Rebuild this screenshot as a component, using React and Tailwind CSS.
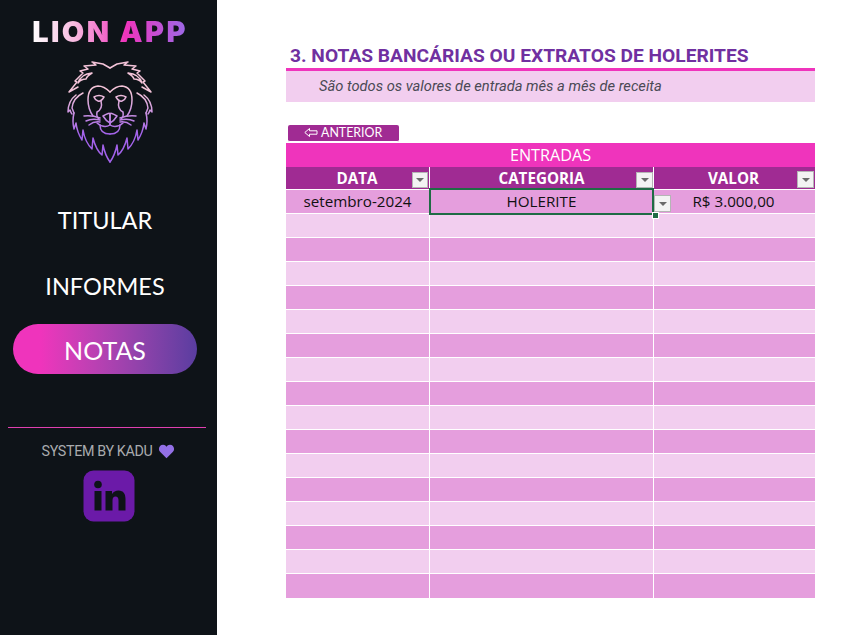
const rows = Array.from({ length: 17 }, (_, i) => i);

function Lion() {
  const half = (
    <g>
      <path d="M110 68 L103 64 L92 62 L96 65 L84 66 L88 69 L80 71 L83 73 L75 81 L77 82 L69 92 L78 87" />
      <path d="M78 83 Q81 74 92 73 Q87 76 86 79 Q81 79 78 83" />
      <path d="M83 93 Q73 98 72 108 L74 113" />
      <path d="M76 95 Q68 101 68 112 L70 110 Q71 113 72 114" />
      <path d="M74 113 Q72 121 74 129 L76 123 Q77 132 82 140 L83 130 Q85 142 92 149 L93 138 Q96 150 102 155 L103 145 Q105 155 110 162" />
      <path d="M110 92 Q104 86 98 86 Q88 87 88 100 Q88 109 93 116" />
      <path d="M94 97 Q99 94 104 97 Q101 102 98 101 Q95 100 94 97" />
      <path d="M101 101 Q103 109 97 112 Q96 117 99 119" />
      <path d="M110 123 L110 125 Q104 129 97 123" />
      <path d="M100 125 Q100 134 110 134" />
      <path d="M103 116 Q110 112 110 114 L110 123 Q106 121 103 116" />
      <path d="M84 116 Q92 115 100 118" />
      <path d="M86 121 Q92 118 100 120" />
      <path d="M89 125 Q94 121 100 122" />
    </g>
  );
  return (
    <svg width="110" height="110" viewBox="55 55 110 110" fill="none" stroke="url(#lionGrad)" strokeWidth="1.5" strokeLinejoin="round" strokeLinecap="round">
      <defs>
        <linearGradient id="lionGrad" gradientUnits="userSpaceOnUse" x1="0" y1="62" x2="0" y2="162">
          <stop offset="0.3" stopColor="#f3c3d8" />
          <stop offset="0.72" stopColor="#a262ea" />
          <stop offset="1" stopColor="#a262ea" />
        </linearGradient>
      </defs>
      {half}
      <g transform="translate(220 0) scale(-1 1)">{half}</g>
    </svg>
  );
}

function Filter({ className }) {
  return (
    <div className={`absolute flex items-center justify-center bg-[#f3f3f3] border border-[#b5b5b5] ${className}`}>
      <div className="w-0 h-0 border-l-[4px] border-r-[4px] border-t-[4px] border-l-transparent border-r-transparent border-t-[#6a6a6a]" />
    </div>
  );
}

export default function App() {
  return (
    <div className="flex w-[854px] h-[635px] bg-white overflow-hidden font-['Open_Sans',sans-serif]">
      <aside className="w-[217px] shrink-0 bg-[#0e1318] flex flex-col items-center">
        <div className="mt-[16px] h-[32px] ml-[3px] text-[29px] leading-[32px] font-black tracking-[2.4px] font-['Inter',sans-serif] text-transparent bg-clip-text bg-[linear-gradient(90deg,#ffffff_0%,#f7b8df_28%,#ef34bc_60%,#9a6ae8_100%)] whitespace-nowrap">
          LION APP
        </div>
        <div className="mt-[7px] h-[110px] ml-[3px]">
          <Lion />
        </div>
        <nav className="mt-[25px] w-full flex flex-col items-center pr-[7px] font-['Lato',sans-serif] text-white">
          <div className="h-[66px] flex items-center pb-[5px] text-[23.5px]">TITULAR</div>
          <div className="h-[66px] flex items-center pb-[5px] text-[23.5px]">INFORMES</div>
          <div className="mt-[2px] w-[184px] h-[50px] pt-[3px] rounded-full flex items-center justify-center text-[25px] bg-gradient-to-r from-[#ef34bc] from-15% to-[#5a3da0]">NOTAS</div>
        </nav>
        <div className="mt-[53px] w-[198px] h-px mr-[3px] bg-[#e040b0]" />
        <div className="mt-[13px] flex items-center gap-[6px] text-[#a9abae] text-[14.3px] leading-[20px] font-['Roboto',sans-serif] tracking-[-0.35px]">
          <span>SYSTEM BY KADU</span>
          <svg width="17" height="15" viewBox="0 0 24 22"><path fill="#9370e6" d="M12 21 L2.5 11.5 C-1 7.5 1.5 1 7 1 C9.2 1 11 2.2 12 4 C13 2.2 14.8 1 17 1 C22.5 1 25 7.5 21.5 11.5 Z" /></svg>
        </div>
        <svg className="mt-[9px]" width="52" height="52" viewBox="0 0 52 52">
          <rect x="0.5" y="0.5" width="51" height="51" rx="10" fill="#6b1aa8" />
          <circle cx="15" cy="14.5" r="3.8" fill="#0e1318" />
          <rect x="11.5" y="21" width="7" height="19.5" fill="#0e1318" />
          <path fill="#0e1318" d="M22.5 21 H29 V24 C30.5 21.8 32.5 20.5 35.5 20.5 C40.5 20.5 42.5 24 42.5 29 V40.5 H35.5 V30.5 C35.5 27.8 34.5 26.5 32.5 26.5 C30.5 26.5 29.5 28 29.5 30.5 V40.5 H22.5 Z" />
        </svg>
      </aside>

      <main className="flex-1 pl-[69px] pr-[39px]">
        <h1 className="mt-[44px] h-[24px] pl-[4px] text-[19.2px] leading-[23px] font-bold text-[#7030a0] font-['Roboto',sans-serif] whitespace-nowrap">
          3. NOTAS BANCÁRIAS OU EXTRATOS DE HOLERITES
        </h1>
        <div className="h-[3px] bg-[#ef34bc]" />
        <div className="h-[31px] bg-[#f2ceef] pl-[33px] flex items-center pb-[1px] text-[14.7px] italic text-[#4a4a55] font-['Roboto',sans-serif]">
          São todos os valores de entrada mês a mês de receita
        </div>
        <div className="mt-[23px] ml-[2px] w-[111px] h-[17px] rounded-[2px] bg-[#a02b93] text-white text-[12.4px] leading-[16px] font-['Lato',sans-serif] flex items-center pl-[16px] gap-[3px] border-b border-white">
          <svg width="14" height="10" viewBox="0 0 14 10" fill="none" stroke="white" strokeWidth="1"><path d="M5.5 0.5 L0.8 4.5 L5.5 8.5 V6.2 H13 V2.8 H5.5 Z" /></svg>
          <span>ANTERIOR</span>
        </div>
        <div className="mt-[1px] relative">
          <div className="h-[24px] bg-[#ef34bc] text-white text-[16.2px] leading-[24px] text-center">ENTRADAS</div>
          <div className="grid grid-cols-[143px_1px_223px_1px_161px] h-[22px] bg-[#a02b93] text-white text-[15.2px] font-bold leading-[22px] text-center">
            <div className="pr-[1px]">DATA</div>
            <div className="bg-white" />
            <div>CATEGORIA</div>
            <div className="bg-white" />
            <div className="pr-[2px]">VALOR</div>
          </div>
          {rows.map((i) => (
            <div key={i} className={`grid grid-cols-[143px_1px_223px_1px_161px] ${i === 16 ? "h-[25px]" : "h-[24px]"} border-t border-white text-[15.2px] leading-[23px] text-center text-[#111111] ${i % 2 === 0 ? "bg-[#e59edd]" : "bg-[#f2ceef]"}`}>
              <div>{i === 0 ? "setembro-2024" : ""}</div>
              <div className="bg-white" />
              <div>{i === 0 ? "HOLERITE" : ""}</div>
              <div className="bg-white" />
              <div className="pr-[2px]">{i === 0 ? "R$ 3.000,00" : ""}</div>
            </div>
          ))}
          <Filter className="left-[126px] top-[29px] w-[16px] h-[16px]" />
          <Filter className="left-[350px] top-[29px] w-[17px] h-[16px]" />
          <Filter className="left-[511px] top-[28px] w-[17px] h-[17px]" />
          <div className="absolute left-[143px] top-[45px] w-[225px] h-[27px] border-2 border-[#1f6b45]" />
          <div className="absolute left-[366px] top-[69px] w-[5px] h-[5px] bg-[#1f6b45] border border-white box-content" />
          <Filter className="left-[368px] top-[52px] w-[17px] h-[17px]" />
        </div>
      </main>
    </div>
  );
}
